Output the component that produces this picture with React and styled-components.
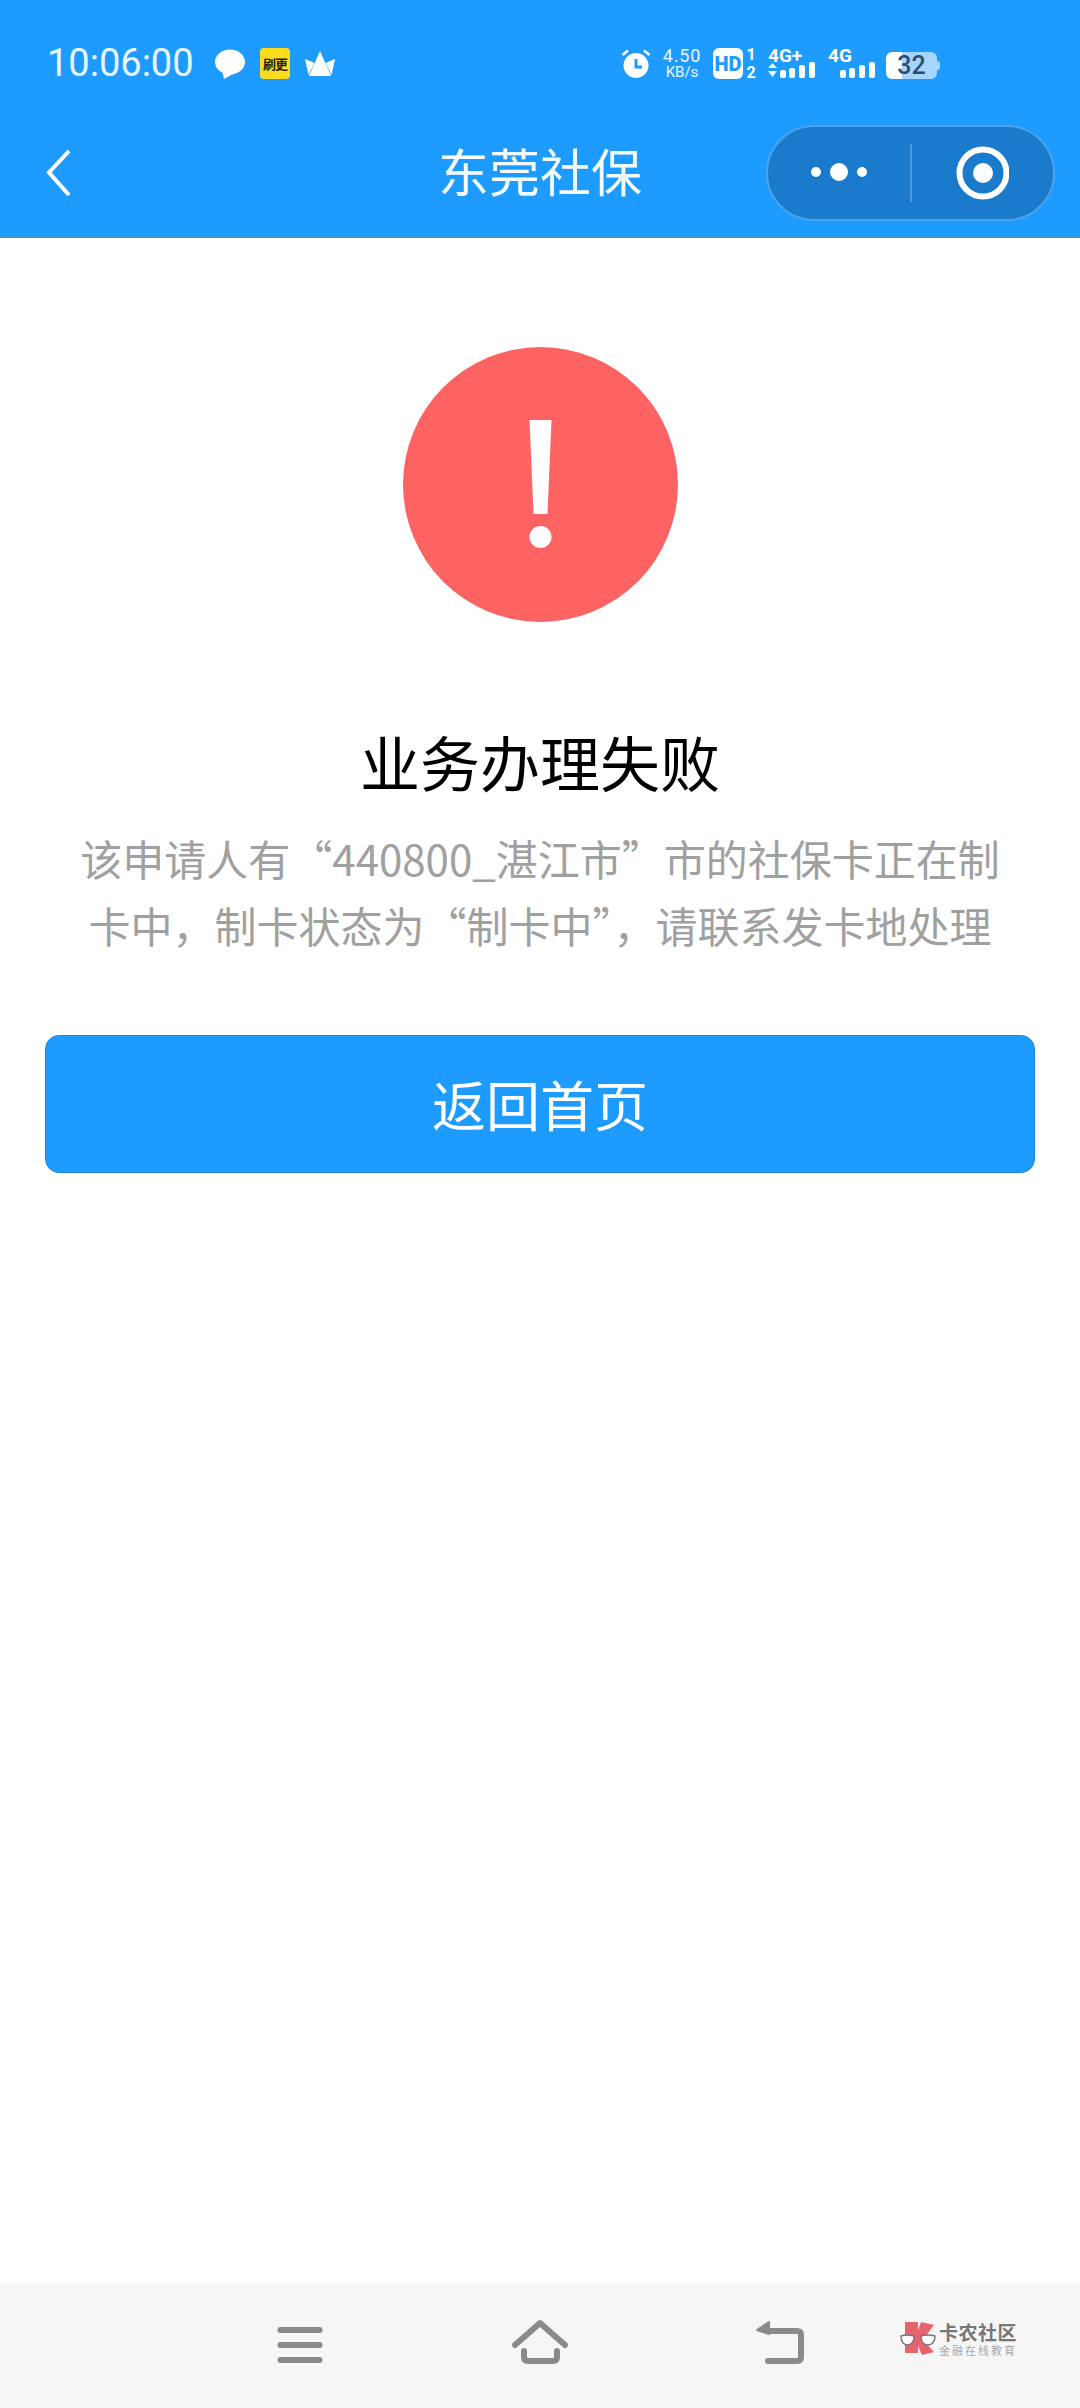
import React from "react"
import styled, { createGlobalStyle } from "styled-components"

const GlobalStyle = createGlobalStyle`
  html, body {
    margin: 0;
    padding: 0;
    background: #fff;
  }
  body {
    font-family: "Noto Sans CJK SC", "Noto Sans", sans-serif;
  }
`

const Page = styled.div`
  min-height: 100vh;
  display: flex;
  flex-direction: column;
  background: #fff;
`

const Header = styled.header`
  background: #1e9bff;
  color: #fff;
  height: 238px;
  box-sizing: border-box;
  padding-top: 48px;
  border-bottom: 2px solid #3a95cc;
`

const StatusBar = styled.div`
  height: 31px;
  display: flex;
  align-items: center;
  padding: 0 140px 0 47px;
`

const Clock = styled.div`
  font-family: Roboto, sans-serif;
  font-size: 38px;
  line-height: 31px;
  width: 168px;
  color: #eaf6ff;
`

const LeftIcons = styled.div`
  display: flex;
  gap: 15px;
  align-items: center;
`

const RightIcons = styled.div`
  margin-left: auto;
  display: flex;
  align-items: center;
  gap: 12px;
`

const AppBadge = styled.div`
  width: 30px;
  height: 31px;
  border-radius: 4px;
  background: #fbdc1c;
  color: #2a1c0a;
  display: flex;
  align-items: center;
  justify-content: center;
  font-size: 13px;
  font-weight: 700;
  letter-spacing: -1px;
`

const Speed = styled.div`
  width: 38px;
  display: flex;
  flex-direction: column;
  align-items: center;
  font-family: Roboto, sans-serif;
  color: #eaf6ff;
  line-height: 15px;
  span:first-child {
    font-size: 18px;
    letter-spacing: 0.8px;
  }
  span:last-child {
    font-size: 15px;
    margin-top: 2px;
  }
`

const HdGroup = styled.div`
  display: flex;
  gap: 3px;
`

const HdBadge = styled.div`
  width: 30px;
  height: 31px;
  border-radius: 6px;
  background: #fff;
  color: #1e9bff;
  display: flex;
  align-items: center;
  justify-content: center;
  font-family: Roboto, sans-serif;
  font-weight: 900;
  font-size: 20px;
`

const SimSlots = styled.div`
  width: 10px;
  height: 31px;
  display: flex;
  flex-direction: column;
  justify-content: space-between;
  align-items: center;
  font-family: Roboto, sans-serif;
  font-weight: 700;
  font-size: 16px;
  line-height: 13px;
`

const Signal = styled.div`
  width: 48px;
  height: 31px;
  display: flex;
  flex-direction: column;
`

const SignalLabel = styled.span`
  font-family: Roboto, sans-serif;
  font-weight: 700;
  font-size: 19px;
  line-height: 15px;
  height: 13px;
`

const Battery = styled.div`
  position: relative;
  width: 51px;
  height: 27px;
  margin: 3px 3px 0 -2px;
  border-radius: 6px;
  background: linear-gradient(to right, #fff 16px, #a6d6ff 16px);
  color: #2f4d70;
  display: flex;
  align-items: center;
  justify-content: center;
  font-family: Roboto, sans-serif;
  font-weight: 500;
  font-size: 25px;
  &::after {
    content: "";
    position: absolute;
    right: -3px;
    top: 9px;
    width: 3px;
    height: 9px;
    border-radius: 0 3px 3px 0;
    background: #a6d6ff;
  }
`

const NavRow = styled.div`
  display: grid;
  grid-template-columns: 1fr auto 1fr;
  align-items: center;
  padding: 46px 25px 0;
`

const BackButton = styled.div`
  display: flex;
  margin-left: 21px;
`

const Title = styled.h1`
  margin: 0;
  padding-bottom: 6px;
  font-size: 51px;
  font-weight: 400;
  line-height: 90px;
  color: #f4fbff;
`

const Capsule = styled.div`
  justify-self: end;
  width: 289px;
  height: 96px;
  box-sizing: border-box;
  border-radius: 48px;
  border: 2px solid #4aa3eb;
  background: #1a7bcc;
  display: flex;
  align-items: center;
`

const CapsuleCell = styled.div`
  flex: 1;
  display: flex;
  justify-content: center;
`

const CapsuleDivider = styled.div`
  width: 2px;
  height: 58px;
  background: #4f9ad8;
`

const Main = styled.main`
  flex: 1;
  display: flex;
  flex-direction: column;
  align-items: center;
`

const ResultIcon = styled.div`
  margin-top: 109px;
  width: 275px;
  height: 275px;
  display: flex;
`

const ResultTitle = styled.h2`
  margin: 99px 0 0;
  font-size: 60px;
  font-weight: 400;
  line-height: 80px;
  color: #000;
`

const Message = styled.p`
  margin: 23px 0 0;
  width: 940px;
  font-size: 42px;
  line-height: 67px;
  text-align: center;
  color: #a0a0a0;
`

const HomeButton = styled.button`
  margin-top: 77px;
  width: 990px;
  height: 138px;
  box-sizing: border-box;
  border: 1px solid #1a86dc;
  border-radius: 14px;
  background: #1e9bff;
  color: #fff;
  font-family: "Noto Sans CJK SC", "Noto Sans", sans-serif;
  font-size: 54px;
  font-weight: 400;
  padding: 0 0 2px;
`

const BottomBar = styled.nav`
  position: relative;
  height: 125px;
  box-sizing: border-box;
  padding-top: 35px;
  background: #f6f6f6;
  display: flex;
  justify-content: center;
`

const BottomCell = styled.div`
  width: 240px;
  display: flex;
  justify-content: center;
`

const Watermark = styled.div`
  position: absolute;
  left: 900px;
  top: 39px;
  display: flex;
  gap: 3px;
`

const WatermarkText = styled.div`
  display: flex;
  flex-direction: column;
  align-items: flex-start;
`

const WatermarkName = styled.span`
  font-size: 19px;
  font-weight: 700;
  line-height: 19px;
  letter-spacing: 0.5px;
  color: #777;
`

const WatermarkSlogan = styled.span`
  margin-top: 2px;
  font-size: 11px;
  line-height: 14px;
  letter-spacing: 2px;
  color: #a8a8a8;
`

const ChatIcon = () => (
  <svg width="30" height="30" viewBox="0 0 30 30">
    <ellipse cx="15" cy="13" rx="15" ry="12.5" fill="#fff" />
    <path d="M7 21L9 30L18 25Z" fill="#fff" />
  </svg>
)

const CrownIcon = () => (
  <svg width="30" height="27" viewBox="0 0 30 27">
    <path d="M15 1L26 26H4Z" fill="#fff" />
    <path d="M0 9L9.5 13L3.5 25Z" fill="#fff" />
    <path d="M30 9L20.5 13L26.5 25Z" fill="#fff" />
  </svg>
)

const AlarmIcon = () => (
  <svg width="30" height="30" viewBox="0 0 30 30">
    <circle cx="15" cy="16.5" r="12.5" fill="#fff" />
    <path d="M1.5 6L7 1.5M28.5 6L23 1.5" stroke="#fff" strokeWidth="2.5" />
    <path d="M15 10V18H21" stroke="#1e9bff" strokeWidth="3" fill="none" />
  </svg>
)

const SignalBars = ({ arrows }) => (
  <svg width="48" height="18" viewBox="0 0 48 18">
    {arrows && <path d="M0 7L4.5 2L9 7ZM0 10H9L4.5 16Z" fill="#eaf6ff" />}
    <rect x="12" y="9" width="6" height="8" rx="2" fill="#fff" />
    <rect x="21" y="7" width="6" height="10" rx="2" fill="#fff" />
    <rect x="31" y="4" width="6" height="13" rx="2" fill="#fff" />
    <rect x="41" y="1" width="6" height="16" rx="2" fill="#fff" />
  </svg>
)

const BackIcon = () => (
  <svg width="26" height="48" viewBox="0 0 26 48">
    <path d="M23 2L3 23.5L23 46" stroke="#fff" strokeWidth="4" fill="none" />
  </svg>
)

const DotsIcon = () => (
  <svg width="58" height="20" viewBox="0 0 58 20">
    <circle cx="6" cy="9" r="5" fill="#fff" />
    <circle cx="29" cy="9" r="9" fill="#fff" />
    <circle cx="52" cy="9" r="5" fill="#fff" />
  </svg>
)

const RingIcon = () => (
  <svg width="54" height="54" viewBox="0 0 54 54">
    <circle cx="28" cy="27" r="23.5" stroke="#fff" strokeWidth="6" fill="none" />
    <circle cx="28" cy="27" r="10" fill="#fff" />
  </svg>
)

const FailIcon = () => (
  <svg width="275" height="275" viewBox="0 0 275 275">
    <circle cx="137.5" cy="137.5" r="137.5" fill="#fe6363" />
    <path d="M126.5 73H148.5L144.5 167H130.5Z" fill="#fff" />
    <circle cx="137.5" cy="190" r="11" fill="#fff" />
  </svg>
)

const MenuIcon = () => (
  <svg width="60" height="48" viewBox="0 0 60 48">
    <rect x="7.5" y="9" width="45" height="6" rx="3" fill="#8a8a8a" />
    <rect x="7.5" y="24" width="45" height="6" rx="3" fill="#8a8a8a" />
    <rect x="7.5" y="39" width="45" height="6" rx="3" fill="#8a8a8a" />
  </svg>
)

const HomeIcon = () => (
  <svg width="60" height="48" viewBox="0 0 60 48" fill="none" stroke="#8a8a8a" strokeWidth="6" strokeLinecap="round">
    <path d="M5 27L30 5L55 27" strokeLinejoin="round" />
    <path d="M14 33V39Q14 43 18 43H43Q47 43 47 39V33" />
  </svg>
)

const ReturnIcon = () => (
  <svg width="60" height="48" viewBox="0 0 60 48">
    <path d="M20 13H47Q51 13 51 17V39Q51 43 47 43H18" fill="none" stroke="#8a8a8a" strokeWidth="6" strokeLinecap="round" />
    <path d="M7 12L19 4V16Z" fill="#8a8a8a" stroke="#8a8a8a" strokeWidth="2" strokeLinejoin="round" />
  </svg>
)

const LogoMark = () => (
  <svg width="36" height="34" viewBox="0 0 36 34">
    <path d="M5 0H18V31H5Z" fill="#e8636e" />
    <path d="M21 0L34 3L23 18L34 30L22 33L15 17Z" fill="#e8636e" />
    <path d="M1 14Q7 12 14 14Q14 23 7 23Q1 22 1 14Z" fill="#fff" stroke="#777" strokeWidth="1.4" />
    <path d="M21 14Q28 12 35 14Q35 22 28 23Q21 23 21 14Z" fill="#fff" stroke="#777" strokeWidth="1.4" />
  </svg>
)

const App = () => {
  return (
    <>
      <GlobalStyle />
      <Page>
        <Header>
          <StatusBar>
            <Clock>10:06:00</Clock>
            <LeftIcons>
              <ChatIcon />
              <AppBadge>刷更</AppBadge>
              <CrownIcon />
            </LeftIcons>
            <RightIcons>
              <AlarmIcon />
              <Speed>
                <span>4.50</span>
                <span>KB/s</span>
              </Speed>
              <HdGroup>
                <HdBadge>HD</HdBadge>
                <SimSlots>
                  <span>1</span>
                  <span>2</span>
                </SimSlots>
              </HdGroup>
              <Signal>
                <SignalLabel>4G+</SignalLabel>
                <SignalBars arrows />
              </Signal>
              <Signal>
                <SignalLabel>4G</SignalLabel>
                <SignalBars />
              </Signal>
              <Battery>32</Battery>
            </RightIcons>
          </StatusBar>
          <NavRow>
            <BackButton>
              <BackIcon />
            </BackButton>
            <Title>东莞社保</Title>
            <Capsule>
              <CapsuleCell>
                <DotsIcon />
              </CapsuleCell>
              <CapsuleDivider />
              <CapsuleCell>
                <RingIcon />
              </CapsuleCell>
            </Capsule>
          </NavRow>
        </Header>
        <Main>
          <ResultIcon>
            <FailIcon />
          </ResultIcon>
          <ResultTitle>业务办理失败</ResultTitle>
          <Message>该申请人有“440800_湛江市”市的社保卡正在制卡中，制卡状态为“制卡中”，请联系发卡地处理</Message>
          <HomeButton>返回首页</HomeButton>
        </Main>
        <BottomBar>
          <BottomCell>
            <MenuIcon />
          </BottomCell>
          <BottomCell>
            <HomeIcon />
          </BottomCell>
          <BottomCell>
            <ReturnIcon />
          </BottomCell>
          <Watermark>
            <LogoMark />
            <WatermarkText>
              <WatermarkName>卡农社区</WatermarkName>
              <WatermarkSlogan>金融在线教育</WatermarkSlogan>
            </WatermarkText>
          </Watermark>
        </BottomBar>
      </Page>
    </>
  )
}

export default App
